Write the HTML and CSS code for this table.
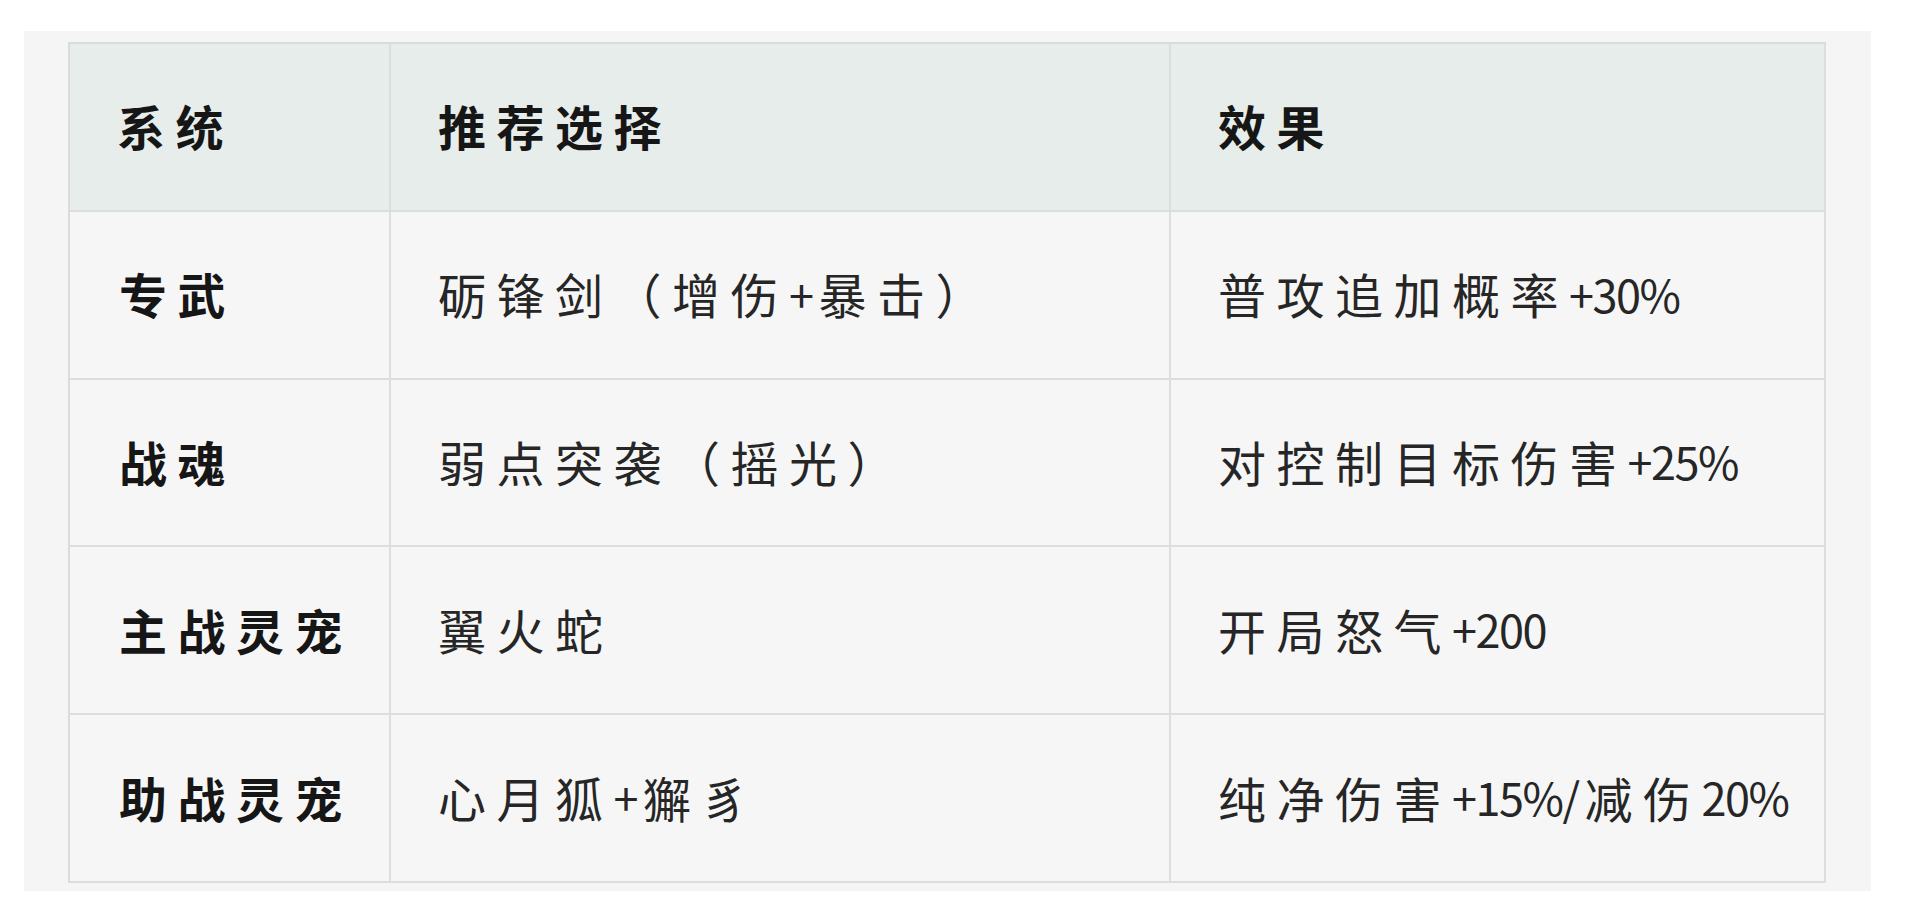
FILE: index.html
```html
<!DOCTYPE html>
<html lang="zh-CN">
<head>
<meta charset="utf-8">
<title>配置推荐</title>
<link rel="stylesheet" href="styles.css">
</head>
<body>
<div class="panel">
  <div class="grid">
    <div class="cell head">系统</div>
    <div class="cell head">推荐选择</div>
    <div class="cell head">效果</div>

    <div class="cell key">专武</div>
    <div class="cell">砺锋剑（增伤<span class="num">+</span>暴击）</div>
    <div class="cell">普攻追加概率<span class="num">+30%</span></div>

    <div class="cell key">战魂</div>
    <div class="cell">弱点突袭（摇光）</div>
    <div class="cell">对控制目标伤害<span class="num">+25%</span></div>

    <div class="cell key">主战灵宠</div>
    <div class="cell">翼火蛇</div>
    <div class="cell">开局怒气<span class="num">+200</span></div>

    <div class="cell key">助战灵宠</div>
    <div class="cell">心月狐<span class="num">+</span>獬豸</div>
    <div class="cell">纯净伤害<span class="num">+15%/</span>减伤<span class="num">20%</span></div>
  </div>
</div>
</body>
</html>
```

FILE: styles.css
```css
html, body {
  margin: 0;
  padding: 0;
  background: #ffffff;
}

body {
  width: 1920px;
  height: 908px;
  overflow: hidden;
  font-family: "Noto Sans CJK SC", "Noto Sans", sans-serif;
}

.panel {
  margin: 31px 0 0 24px;
  width: 1847px;
  height: 860px;
  box-sizing: border-box;
  padding: 11px 45px 6px 44px;
  background: #f5f5f5;
}

.grid {
  display: grid;
  grid-template-columns: 321px 780px 655px;
  grid-auto-rows: 167.8px;
  width: 1758px;
  box-sizing: border-box;
  border-top: 2px solid #d9dcdb;
  border-left: 2px solid #d9dcdb;
  background: #f6f6f6;
}

.cell {
  display: flex;
  align-items: center;
  box-sizing: border-box;
  padding-left: 47px;
  padding-bottom: 3px;
  border-right: 2px solid #dcdedd;
  border-bottom: 2px solid #dcdedd;
  font-size: 48px;
  letter-spacing: 10.5px;
  color: #262626;
  font-weight: 400;
  white-space: nowrap;
}

.head {
  background: #e7edea;
  color: #161616;
  font-weight: 700;
}

.key {
  color: #161616;
  font-weight: 700;
  padding-left: 49px;
}

.num {
  font-size: 45px;
  letter-spacing: -1.5px;
  margin-right: 6px;
}
```
